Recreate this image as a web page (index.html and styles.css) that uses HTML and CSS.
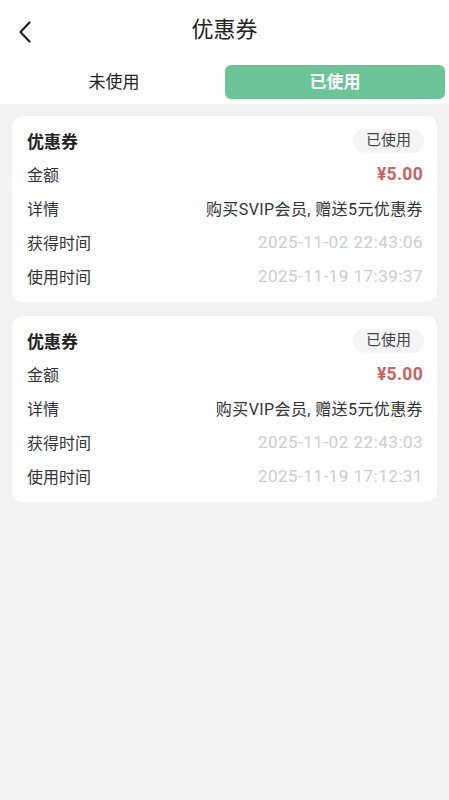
FILE: index.html
```html
<!DOCTYPE html>
<html lang="zh-CN">
<head>
<meta charset="utf-8">
<link rel="stylesheet" href="styles.css">
</head>
<body>
<div class="page">
  <header class="topbar">
    <span class="back">
      <svg width="14" height="22" viewBox="0 0 14 22"><path d="M11.5 1.5 L2.5 11 L11.5 20.5" fill="none" stroke="#222" stroke-width="2.2" stroke-linecap="round" stroke-linejoin="round"/></svg>
    </span>
    <h1 class="title">优惠券</h1>
  </header>
  <nav class="tabs">
    <div class="tab">未使用</div>
    <div class="tab active">已使用</div>
  </nav>
  <main class="list">
    <section class="card">
      <div class="row head"><span class="name">优惠券</span><span class="badge">已使用</span></div>
      <div class="row"><span class="label">金额</span><span class="amount">¥5.00</span></div>
      <div class="row"><span class="label">详情</span><span class="value">购买SVIP会员, 赠送5元优惠券</span></div>
      <div class="row"><span class="label">获得时间</span><span class="time">2025-11-02 22:43:06</span></div>
      <div class="row"><span class="label">使用时间</span><span class="time">2025-11-19 17:39:37</span></div>
    </section>
    <section class="card">
      <div class="row head"><span class="name">优惠券</span><span class="badge">已使用</span></div>
      <div class="row"><span class="label">金额</span><span class="amount">¥5.00</span></div>
      <div class="row"><span class="label">详情</span><span class="value">购买VIP会员, 赠送5元优惠券</span></div>
      <div class="row"><span class="label">获得时间</span><span class="time">2025-11-02 22:43:03</span></div>
      <div class="row"><span class="label">使用时间</span><span class="time">2025-11-19 17:12:31</span></div>
    </section>
  </main>
</div>
</body>
</html>
```
FILE: styles.css
```css
* { box-sizing: border-box; margin: 0; padding: 0; }
html, body { height: 100%; }
body {
  background: #f2f2f2;
  font-family: Roboto, "Noto Sans CJK SC", "Noto Sans", sans-serif;
  color: #222;
}
.page { min-height: 800px; background: #f2f2f2; }
.topbar {
  position: relative;
  height: 62px;
  background: #fff;
  display: flex;
  align-items: center;
  justify-content: center;
}
.back {
  position: absolute;
  left: 18px;
  top: 21px;
  width: 14px;
  height: 22px;
  display: flex;
}
.title {
  font-size: 22px;
  font-weight: 400;
  color: #222;
  line-height: 1;
  margin-top: -2px;
}
.tabs {
  background: #fff;
  display: grid;
  grid-template-columns: 1fr 1fr;
  gap: 1px;
  padding: 3px 4px 5px 4px;
  height: 42px;
}
.tab {
  display: flex;
  align-items: center;
  justify-content: center;
  font-size: 17px;
  color: #222;
  border-radius: 6px;
  height: 34px;
  padding-bottom: 3px;
}
.tab.active {
  background: #6cc596;
  color: #fff;
  font-weight: 700;
}
.list {
  padding: 12px 12px;
  display: flex;
  flex-direction: column;
  gap: 14px;
}
.card {
  background: #fff;
  border-radius: 10px;
  padding: 8px 14px 8px 15px;
}
.row {
  height: 34px;
  display: flex;
  align-items: center;
  justify-content: space-between;
  font-size: 16px;
}
.row > span { padding-bottom: 2px; }
.row > span.badge { padding-bottom: 0; }
.label { color: #333; }
.name { font-weight: 700; font-size: 17px; color: #222; }
.badge {
  background: #f5f5f5;
  color: #444;
  font-size: 15px;
  border-radius: 12px;
  padding: 0 13px;
  height: 24px;
  line-height: 22px;
  margin-right: -1px;
}
.amount { color: #cf5f5a; font-weight: 700; font-size: 17.5px; letter-spacing: 0.3px; }
.value { color: #333; font-size: 16px; letter-spacing: 0.4px; }
.time { color: #cdcdcd; font-size: 17px; letter-spacing: 0.5px; }
```
